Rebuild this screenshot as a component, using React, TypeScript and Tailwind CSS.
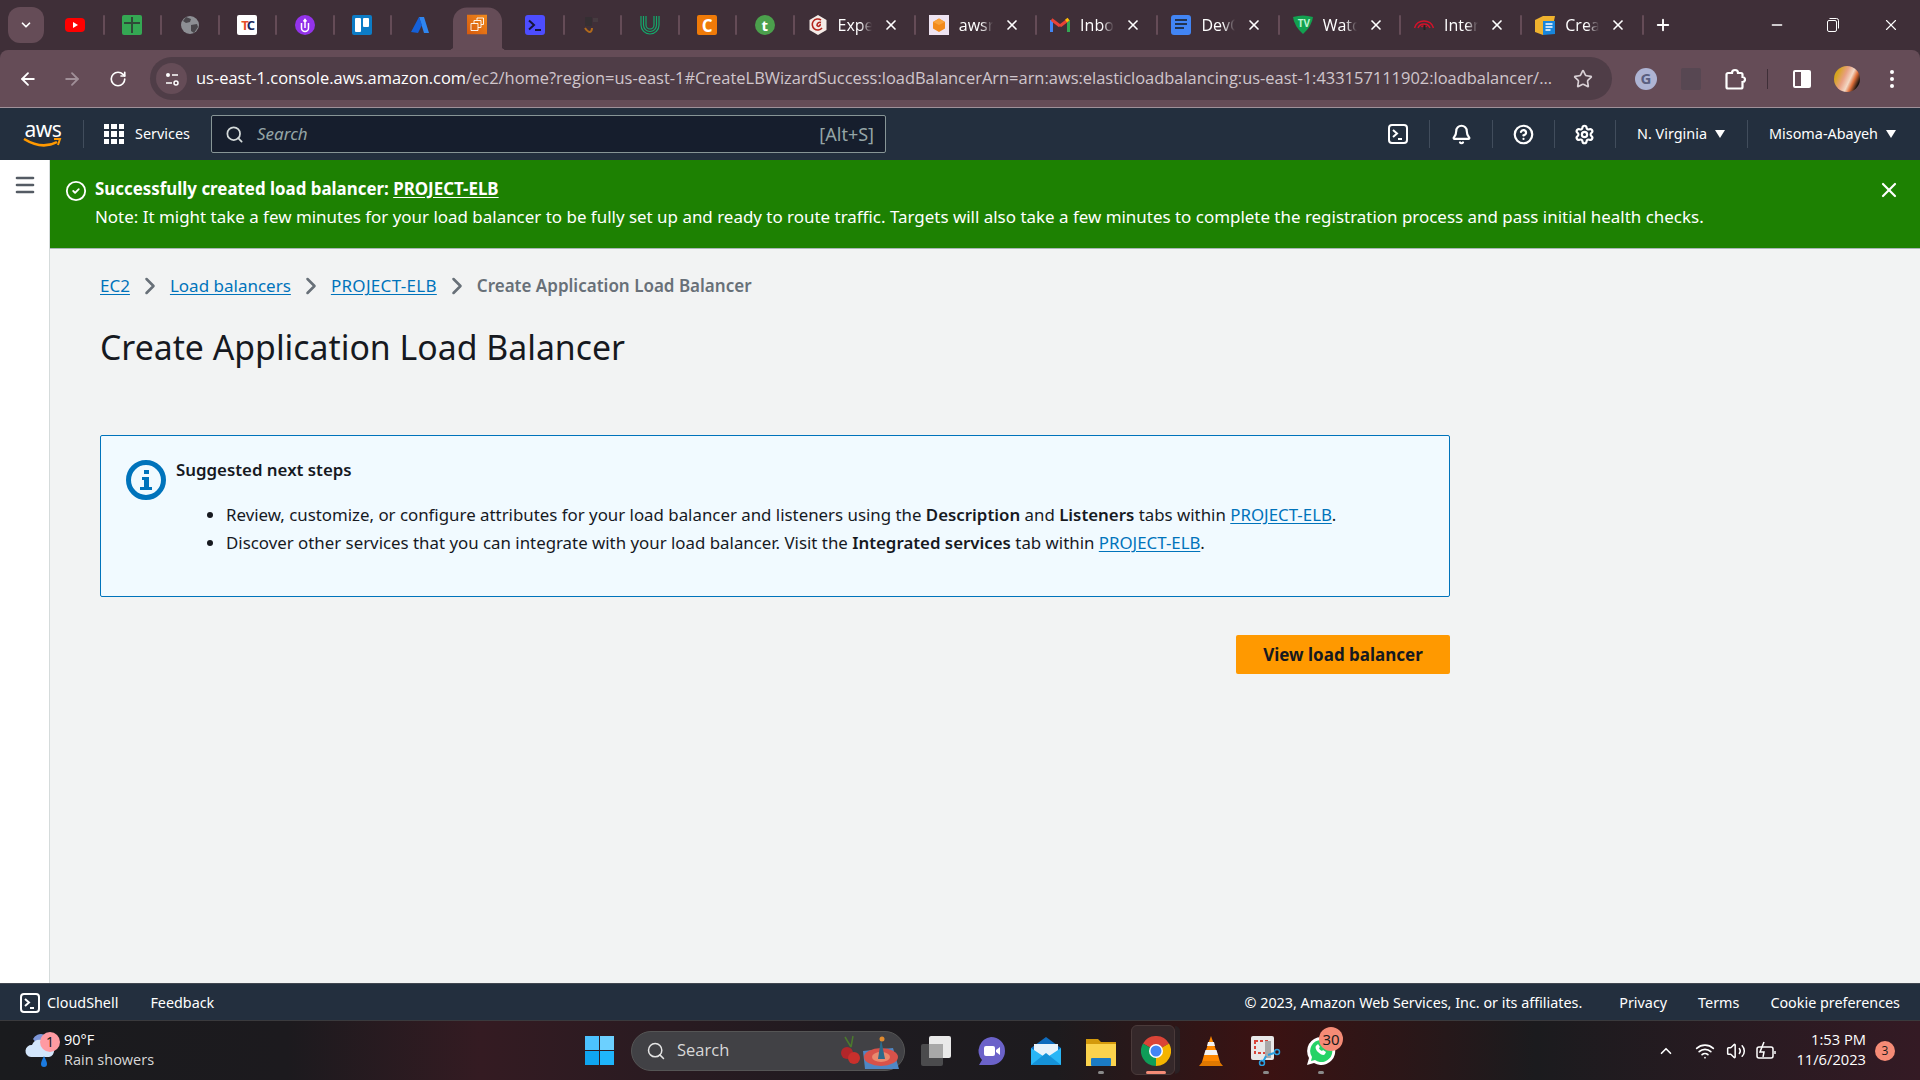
import {
  ArrowLeft,
  ArrowRight,
  Bell,
  ChevronDown,
  ChevronRight,
  ChevronUp,
  CircleCheck,
  CircleHelp,
  Menu,
  Minus,
  Plus,
  RotateCw,
  Search,
  Settings,
  Star,
  Volume2,
  Wifi,
  X,
} from "lucide-react";
import type { ReactNode } from "react";

/* favicons for the tab strip */
const Youtube = () => (
  <svg width="20" height="20" viewBox="0 0 20 20">
    <rect y="3" width="20" height="14" rx="4" fill="#f00" />
    <path d="M8 7l5 3-5 3z" fill="#fff" />
  </svg>
);
const SheetsPlus = () => (
  <svg width="20" height="20" viewBox="0 0 20 20">
    <rect width="20" height="20" rx="2" fill="#34a853" />
    <path d="M2 8h16M10 2v16" stroke="#2f4a38" strokeWidth="2" />
  </svg>
);
const Globe = () => (
  <svg width="20" height="20" viewBox="0 0 20 20">
    <circle cx="10" cy="10" r="9" fill="#8d8f94" />
    <path d="M6 2l5 2-1 3-4 1-3-2zM11 10l6-1 1 3-4 6-3-2z" fill="#49464b" />
  </svg>
);
const TcLogo = () => (
  <div className="flex h-5 w-5 items-center justify-center rounded-[2px] bg-white text-[13px] font-bold leading-none tracking-[-2px]">
    <span className="text-[#e8502a]">T</span>
    <span className="text-[#1b2a5c]">C</span>
  </div>
);
const PurpleU = () => (
  <svg width="20" height="20" viewBox="0 0 20 20">
    <circle cx="10" cy="10" r="10" fill="#9333ea" />
    <path d="M6.500 8v5a3.500 3.500 0 0 0 7 0V8M10 13V6M8.500 6.500L10 4.500l1.500 2" fill="none" stroke="#fff" strokeWidth="1.500" />
  </svg>
);
const Trello = () => (
  <svg width="20" height="20" viewBox="0 0 20 20">
    <rect width="20" height="20" rx="2" fill="#0c7cc6" />
    <rect x="3" y="3" width="6" height="14" rx="1" fill="#fff" />
    <rect x="11" y="3" width="6" height="9" rx="1" fill="#fff" />
  </svg>
);
const Azure = () => (
  <svg width="20" height="20" viewBox="0 0 20 20">
    <path d="M9 2h5l5 16h-5z" fill="#2f86f0" />
    <path d="M9 2L1 17l7 1 4-8z" fill="#1560d8" />
  </svg>
);
const Ec2 = () => (
  <svg width="20" height="20" viewBox="0 0 20 20">
    <defs>
      <linearGradient id="ec2" x1="0" y1="1" x2="1" y2="0">
        <stop offset="0" stopColor="#d4590e" />
        <stop offset="1" stopColor="#f28a1c" />
      </linearGradient>
    </defs>
    <rect width="20" height="20" fill="url(#ec2)" />
    <path d="M4 9h7v7H4zM7 9V6h7v7h-3M10 6V3.500h6.500V10H14" fill="none" stroke="#fff" strokeWidth="1" opacity=".9" />
  </svg>
);
const Terminal = () => (
  <svg width="20" height="20" viewBox="0 0 20 20">
    <rect width="20" height="20" rx="3" fill="#4d4dff" />
    <path d="M4 5.500L9 10l-5 4.500" fill="none" stroke="#16163a" strokeWidth="2" />
    <path d="M10 15h6" stroke="#16163a" strokeWidth="2" />
  </svg>
);
const AmazonDark = () => (
  <svg width="20" height="20" viewBox="0 0 20 20">
    <path d="M3 2h7v9H3z" fill="#352f33" />
    <path d="M11 3h5v4h-5z" fill="#463b40" />
    <path d="M3 13c2 3 4 4 5 4s2-2 2-4" fill="none" stroke="#b26a1b" strokeWidth="2" />
  </svg>
);
const UpworkU = () => (
  <svg width="20" height="20" viewBox="0 0 20 20" fill="none" stroke="#14a86b" strokeWidth="1.200">
    <path d="M1 1v9a9 9 0 0 0 18 0V1" />
    <path d="M3.500 1v9a6.500 6.500 0 0 0 13 0V1" />
    <path d="M6 1v9a4 4 0 0 0 8 0V1" />
  </svg>
);
const OrangeC = () => (
  <div className="flex h-5 w-5 items-center justify-center rounded-[2px] bg-[#ef7a08] text-[17px] font-bold leading-none text-white">C</div>
);
const GreenT = () => (
  <div className="flex h-5 w-5 items-center justify-center rounded-full bg-[#4ba04c] text-[15px] font-bold leading-none text-white">t</div>
);
const Hexagon = () => (
  <svg width="20" height="20" viewBox="0 0 20 20">
    <path d="M10 0l8.500 5v10L10 20l-8.500-5V5z" fill="#f5ece8" />
    <path d="M13 5a5.500 5.500 0 1 0 1 8M13 7.500a3 3 0 0 0-4 3c1 2 4 0 3-1.500" fill="none" stroke="#b3261e" strokeWidth="1.600" />
  </svg>
);
const OrangeCube = () => (
  <svg width="20" height="20" viewBox="0 0 20 20">
    <rect width="20" height="20" fill="#efe4f2" />
    <path d="M10 3.500l6 3.500v6.500L10 17l-6-3.500V7z" fill="#f28a1c" />
    <path d="M10 10l6-3-6-3.500L4 7z" fill="#f9a23c" />
  </svg>
);
const Gmail = () => (
  <svg width="20" height="20" viewBox="0 0 20 20" fill="none">
    <path d="M1.500 17V5" stroke="#4285f4" strokeWidth="3" />
    <path d="M18.500 17V5" stroke="#34a853" strokeWidth="3" />
    <path d="M1.500 4.500L10 11" stroke="#ea4335" strokeWidth="3" />
    <path d="M10 11l8.500-6.500" stroke="#ea4335" strokeWidth="3" />
    <path d="M16 6l2.500-2" stroke="#fbbc04" strokeWidth="3" />
  </svg>
);
const Docs = () => (
  <svg width="20" height="20" viewBox="0 0 20 20">
    <rect width="20" height="20" rx="3" fill="#4285f4" />
    <path d="M4 5h12M4 9h12M4 13h9" stroke="#22344f" strokeWidth="2" />
  </svg>
);
const TvShield = () => (
  <div className="relative h-5 w-5">
    <svg width="20" height="20" viewBox="0 0 20 20">
      <path d="M0 2q10-3 20 0q-1 9-10 17Q1 11 0 2z" fill="#12a150" />
    </svg>
    <span className="absolute left-[5px] top-[2px] text-[10px] font-bold leading-3 text-[#bdf3cf]">TV</span>
  </div>
);
const Gauge = () => (
  <svg width="20" height="20" viewBox="0 0 20 20" fill="none" stroke="#d3122a" strokeWidth="1.500">
    <path d="M0.500 13a10 10 0 0 1 19 0M4 13a6.500 6.500 0 0 1 12 0M7.500 12a3 3 0 0 1 5 0" />
    <path d="M9.500 10h2v5h-2z" fill="#222" stroke="none" />
  </svg>
);
const BoxDoc = () => (
  <svg width="20" height="20" viewBox="0 0 20 20">
    <path d="M0 5l8-4 12 0-1 5-11 14-8-3z" fill="#efb22e" />
    <path d="M8 6h12v13l-12 1z" fill="#1886dc" />
    <path d="M10.500 9h7M10.500 12h7M10.500 15h5" stroke="#fff" strokeWidth="1.500" />
  </svg>
);

/* pinned tab widths come out at 57.5, the others at 121 */
const pinned: ReactNode[] = [
  <Youtube />,
  <SheetsPlus />,
  <Globe />,
  <TcLogo />,
  <PurpleU />,
  <Trello />,
  <Azure />,
  <Ec2 />,
  <Terminal />,
  <AmazonDark />,
  <UpworkU />,
  <OrangeC />,
  <GreenT />,
];

const openTabs: { title: string; icon: ReactNode }[] = [
  { title: "Expe", icon: <Hexagon /> },
  { title: "awsr", icon: <OrangeCube /> },
  { title: "Inbo", icon: <Gmail /> },
  { title: "DevO", icon: <Docs /> },
  { title: "Watc", icon: <TvShield /> },
  { title: "Inter", icon: <Gauge /> },
  { title: "Crea", icon: <BoxDoc /> },
];

const Sep = ({ hidden }: { hidden?: boolean }) => (
  <div className={`h-5 w-[2px] shrink-0 rounded-full ${hidden ? "bg-transparent" : "bg-[#654c57]"}`} />
);

function TabStrip() {
  return (
    <div className="flex h-[50px] shrink-0 items-center bg-[#3f2f38] font-['Open_Sans',sans-serif] text-white">
      <div className="ml-2 mr-[3px] flex h-9 w-9 items-center justify-center rounded-xl bg-[#654c57]">
        <ChevronDown size={14} strokeWidth={3} />
      </div>
      {pinned.map((icon, i) => (
        <div key={i} className="flex items-center">
          {i === 7 ? (
            <div className="relative flex h-[43px] w-[55.5px] translate-y-[3.5px] justify-center">
              <span className="absolute bottom-0 left-[-4px] h-[10px] w-[10px] bg-[radial-gradient(circle_at_0_0,transparent_10px,#654c57_10.5px)]" />
              <div className="flex h-[43px] w-[49px] items-center justify-center rounded-t-[14px] bg-[#654c57] pb-2">{icon}</div>
              <span className="absolute bottom-0 right-[-4px] h-[10px] w-[10px] bg-[radial-gradient(circle_at_100%_0,transparent_10px,#654c57_10.5px)]" />
            </div>
          ) : (
            <div className="flex w-[55.5px] items-center justify-center">{icon}</div>
          )}
          <Sep hidden={i === 6 || i === 7} />
        </div>
      ))}
      {openTabs.map((t) => (
        <div key={t.title} className="flex items-center">
          <div className="flex w-[119.3px] items-center pl-[13px]">
            {t.icon}
            <span className="ml-[10px] w-[34px] overflow-hidden whitespace-nowrap text-[16px] font-medium [mask-image:linear-gradient(90deg,#000_65%,transparent)]">
              {t.title}
            </span>
            <X size={16} strokeWidth={2.5} className="ml-[11px]" />
          </div>
          <Sep />
        </div>
      ))}
      <Plus size={18} strokeWidth={2.5} className="ml-[10px]" />
      <div className="ml-auto flex items-center">
        <Minus size={16} className="mr-[42px]" />
        <svg width="12" height="14" viewBox="0 0 12 14" fill="none" stroke="#fff" strokeWidth="1" className="mr-[43px]">
          <rect x="0.500" y="2.500" width="9" height="11" rx="1.500" />
          <path d="M2.500 0.500h7a2 2 0 0 1 2 2v8" />
        </svg>
        <X size={18} strokeWidth={1.5} className="mr-[20px]" />
      </div>
    </div>
  );
}

function Toolbar() {
  return (
    <div className="flex h-[58px] shrink-0 items-center rounded-t-lg border-b border-[#a0919a] bg-[#654c57] font-['Open_Sans',sans-serif] text-white">
      <ArrowLeft size={20} strokeWidth={2.2} className="ml-[18px]" />
      <ArrowRight size={20} strokeWidth={2.2} className="ml-[24px] text-[#a08f98]" />
      <RotateCw size={18} strokeWidth={2.2} className="ml-[27px]" />
      <div className="ml-[23px] flex h-[43px] w-[1462px] items-center rounded-full bg-[#4f3d47]">
        <div className="ml-[6px] flex h-[31px] w-[31px] items-center justify-center rounded-full bg-[#654c57]">
          <svg width="16" height="16" viewBox="0 0 16 16" fill="none" stroke="#fff" strokeWidth="1.500">
            <circle cx="4" cy="4" r="2" fill="#fff" stroke="none" />
            <path d="M8 4h6M2 12h6" />
            <circle cx="12" cy="12" r="2" />
          </svg>
        </div>
        <div className="ml-[9px] w-[1366px] whitespace-nowrap text-[16.45px] text-[#d0c6cc]">
          <span className="text-white">us-east-1.console.aws.amazon.com</span>
          /ec2/home?region=us-east-1#CreateLBWizardSuccess:loadBalancerArn=arn:aws:elasticloadbalancing:us-east-1:433157111902:loadbalancer/...
        </div>
        <Star size={20} strokeWidth={2} className="ml-[11px] text-[#d9d0d5]" />
      </div>
      <div className="ml-[23px] flex h-[22px] w-[22px] items-center justify-center rounded-full bg-[#aeb4d4] text-[15px] font-bold text-[#5a5f80]">G</div>
      <div className="ml-[24px] h-[22px] w-[20px] rounded-[2px] bg-[#574752]" />
      {/* extensions puzzle piece */}
      <svg width="21" height="24" viewBox="0 0 21 24" fill="none" stroke="#fff" strokeWidth="2.200" className="ml-[24px]">
        <path d="M3 6h4a3 3 0 0 1 6 0h3a1.500 1.500 0 0 1 1.500 1.500V10a2.500 2.500 0 0 1 0 5v5a1.500 1.500 0 0 1-1.500 1.500H3A1.500 1.500 0 0 1 1.500 20V7.500A1.500 1.500 0 0 1 3 6z" />
      </svg>
      <div className="ml-[21px] h-[20px] w-[1px] bg-[#3f2f38]" />
      <div className="ml-[25px] flex h-[18px] w-[18px] justify-end rounded-[2px] border-2 border-white">
        <div className="w-[8px] bg-white" />
      </div>
      <div className="ml-[23px] h-[26px] w-[26px] rounded-full bg-[linear-gradient(115deg,#d6a520_18%,#e9a083_40%,#f3d9c6_58%,#e0703a_70%,#1b1410_85%)]" />
      <div className="ml-[30px] flex flex-col gap-[3px]">
        <span className="h-[4px] w-[4px] rounded-full bg-white" />
        <span className="h-[4px] w-[4px] rounded-full bg-white" />
        <span className="h-[4px] w-[4px] rounded-full bg-white" />
      </div>
    </div>
  );
}

const CloudShellIcon = ({ size }: { size: number }) => (
  <svg width={size} height={size} viewBox="0 0 20 20" fill="none" stroke="#fff">
    <rect x="1" y="1" width="18" height="18" rx="3" strokeWidth="2" />
    <path d="M5 6l4 3.500-4 3.500" strokeWidth="2" />
    <path d="M10 15h4" strokeWidth="2" />
  </svg>
);

const HeaderSep = () => <div className="h-[28px] w-[1px] bg-[#414d5c]" />;

const Caret = () => (
  <svg width="12" height="10" viewBox="0 0 12 10">
    <path d="M1 1h10L6 9z" fill="#fff" />
  </svg>
);

function AwsHeader() {
  return (
    <div className="flex h-[52px] shrink-0 items-center bg-[#232f3e] text-[14.4px] text-white">
      <div className="ml-[23px] flex w-[40px] flex-col items-center">
        <span className="h-[17px] text-[21px] leading-[17px] tracking-[-0.5px]">aws</span>
        <svg width="40" height="10" viewBox="0 0 40 10" fill="none">
          <path d="M1 1q18 11 33 3" stroke="#f90" strokeWidth="2.500" />
          <path d="M31 1l6 0-2 6" stroke="#f90" strokeWidth="2" />
        </svg>
      </div>
      <div className="ml-[20px] h-[28px] w-[1px] bg-[#414d5c]" />
      <div className="ml-[20px] grid h-[20px] w-[20px] grid-cols-3 gap-[2px]">
        {Array.from({ length: 9 }).map((_, i) => (
          <span key={i} className="bg-white" />
        ))}
      </div>
      <span className="ml-[11px] w-[55px]">Services</span>
      <div className="ml-[21px] flex h-[38px] w-[675px] items-center rounded-[2px] border border-[#879596] bg-[#161e2d]">
        <Search size={19} strokeWidth={2.2} className="ml-[13px] text-[#d5dbdb]" />
        <span className="ml-[13px] text-[17px] italic text-[#95a5a6]">Search</span>
        <span className="ml-auto mr-[11px] text-[18px] text-[#95a5a6]">[Alt+S]</span>
      </div>
      <div className="ml-auto flex items-center">
        <CloudShellIcon size={20} />
        <div className="mx-[21px]">
          <HeaderSep />
        </div>
        <Bell size={21} strokeWidth={2.5} />
        <div className="mx-[20px]">
          <HeaderSep />
        </div>
        <CircleHelp size={21} strokeWidth={2.5} />
        <div className="ml-[20px] mr-[19px]">
          <HeaderSep />
        </div>
        <Settings size={21} strokeWidth={2.5} />
        <div className="ml-[20px] mr-[21px]">
          <HeaderSep />
        </div>
        <span>N. Virginia</span>
        <span className="ml-[7px]">
          <Caret />
        </span>
        <div className="ml-[21px] mr-[21px]">
          <HeaderSep />
        </div>
        <span>Misoma-Abayeh</span>
        <span className="ml-[7px] mr-[23px]">
          <Caret />
        </span>
      </div>
    </div>
  );
}

const Crumb = ({ children }: { children: ReactNode }) => (
  <a className="text-[#0073bb] underline underline-offset-2">{children}</a>
);

const CrumbSep = () => <ChevronRight size={28} strokeWidth={2.2} className="mx-[6px] text-[#687078]" />;

function Content() {
  return (
    <div className="flex min-h-0 flex-1">
      <aside className="w-[50px] shrink-0 border-r border-[#d5dbdb] bg-white pl-[13px] pt-[13px]">
        <Menu size={24} strokeWidth={2.6} className="text-[#545b64]" />
      </aside>
      <main className="flex-1 bg-[#f2f3f3]">
        <div className="flex h-[89px] items-start border-b border-[#aab7b8] bg-[#1d8102] pl-[15px] pr-[19px] pt-[15px] text-[16.95px] text-white">
          <CircleCheck size={22} strokeWidth={2} className="mt-[5px]" />
          <div className="ml-[8px] leading-[28px]">
            <div className="text-[16.9px] font-bold">
              Successfully created load balancer: <a className="underline underline-offset-2">PROJECT-ELB</a>
            </div>
            <div>
              Note: It might take a few minutes for your load balancer to be fully set up and ready to route traffic. Targets will also take a few minutes to complete the registration process and pass initial health checks.
            </div>
          </div>
          <X size={24} strokeWidth={2.2} className="ml-auto mt-[3px]" />
        </div>
        <div className="pl-[50px]">
          <div className="mt-[24px] flex h-[26px] items-center text-[17px]">
            <Crumb>EC2</Crumb>
            <CrumbSep />
            <Crumb>Load balancers</Crumb>
            <CrumbSep />
            <span className="tracking-[0.3px]">
              <Crumb>PROJECT-ELB</Crumb>
            </span>
            <CrumbSep />
            <span className="font-semibold text-[#687078]">Create Application Load Balancer</span>
          </div>
          <h1 className="mt-[25px] text-[33.8px] font-normal leading-[46px] text-[#16191f]">Create Application Load Balancer</h1>
          <div className="mt-[65px] h-[162px] w-[1350px] rounded-[2px] border border-[#0073bb] bg-[#f1faff] pl-[25px] pt-[24px] text-[16.85px] leading-[28px] text-[#16191f]">
            <div className="flex">
              <svg width="40" height="40" viewBox="0 0 40 40" className="shrink-0">
                <circle cx="20" cy="20" r="17.500" fill="none" stroke="#0073bb" strokeWidth="5" />
                <rect x="18" y="10" width="5" height="4" fill="#0073bb" />
                <path d="M16 17h7v10h3v3H14v-3h4v-7h-2z" fill="#0073bb" />
              </svg>
              <div className="ml-[10px] -mt-[4px]">
                <div className="font-semibold">Suggested next steps</div>
                <ul className="ml-[50px] mt-[17px] list-disc">
                  <li>
                    Review, customize, or configure attributes for your load balancer and listeners using the <span className="font-semibold">Description</span> and <span className="font-semibold">Listeners</span> tabs within <Crumb>PROJECT-ELB</Crumb>.
                  </li>
                  <li>
                    Discover other services that you can integrate with your load balancer. Visit the <span className="font-semibold">Integrated services</span> tab within <Crumb>PROJECT-ELB</Crumb>.
                  </li>
                </ul>
              </div>
            </div>
          </div>
          <div className="flex w-[1350px] justify-end pt-[38px]">
            <button className="h-[39px] w-[214px] rounded-[2px] bg-[#ff9900] text-[17px] font-bold text-[#16191f]">View load balancer</button>
          </div>
        </div>
      </main>
    </div>
  );
}

function ConsoleFooter() {
  return (
    <div className="flex h-[37px] shrink-0 items-center border-t border-[#414750] bg-[#232f3e] pt-[2px] text-[14.35px] text-white">
      <div className="ml-[20px]">
        <CloudShellIcon size={20} />
      </div>
      <span className="ml-[7px]">CloudShell</span>
      <span className="ml-[32px]">Feedback</span>
      <span className="ml-auto">© 2023, Amazon Web Services, Inc. or its affiliates.</span>
      <span className="ml-[37px]">Privacy</span>
      <span className="ml-[31px]">Terms</span>
      <span className="ml-[31px] mr-[20px]">Cookie preferences</span>
    </div>
  );
}

const Dot = ({ wide }: { wide?: boolean }) => (
  <div className={`relative mx-auto mt-[4px] h-[3px] rounded-full ${wide ? "w-[20px] bg-[#f58b76]" : "w-[6px] bg-[#8a8a8a]"}`} />
);

const Badge = ({ children, className }: { children: ReactNode; className: string }) => (
  <span className={`absolute flex items-center justify-center rounded-full text-[#1b1b1b] ${className}`}>{children}</span>
);

function TaskIcon({ children, dot, wide, className = "" }: { children: ReactNode; dot?: boolean; wide?: boolean; className?: string }) {
  return (
    <div className={`relative flex w-[55px] flex-col items-center pt-[14px] ${className}`}>
      <div className="flex h-[32px] items-center">{children}</div>
      {dot && <Dot wide={wide} />}
    </div>
  );
}

function Taskbar() {
  return (
    <div className="flex h-[60px] shrink-0 items-center border-t border-[#3a3a3d] bg-[linear-gradient(90deg,#1a1b1e_0%,#1c1a1e_15%,#341b22_25%,#1e1b20_45%,#1d1b1e_55%,#3b1212_66%,#1b1b1e_80%,#341a24_100%)] text-white">
      {/* weather */}
      <div className="relative ml-[25px] w-[30px]">
        <svg width="30" height="36" viewBox="0 0 30 36">
          <path d="M8 6a9 9 0 0 1 17 5l-8 6z" fill="#7d96d8" />
          <path d="M6 24a6 6 0 0 1 1-12 8 8 0 0 1 15 0 6 6 0 0 1 2 12z" fill="#d3e6fb" />
          <path d="M19 23c2 4 3 6 3 8a3 3 0 0 1-6 0c0-2 1-4 3-8z" fill="#1b7be0" />
        </svg>
        <Badge className="-right-[5px] -top-[1px] h-[20px] w-[20px] bg-[#ff9aa2] text-[14px]">1</Badge>
      </div>
      <div className="ml-[9px] -mt-[2px] w-[120px] font-['Open_Sans',sans-serif] text-[14.5px] leading-[20px]">
        <div>90°F</div>
        <div className="whitespace-nowrap text-[#d8d8d8]">Rain showers</div>
      </div>
      {/* start + search */}
      <div className="ml-[401px] grid h-[29px] w-[29px] grid-cols-2 gap-[1px]">
        <span className="bg-[#4cc2ff]" />
        <span className="bg-[#6cd0ff]" />
        <span className="bg-[#0fa5f0]" />
        <span className="bg-[#1fb5fb]" />
      </div>
      <div className="ml-[17px] flex h-[40px] w-[274px] items-center rounded-full border border-[#555] bg-[#414145]">
        <Search size={20} strokeWidth={1.8} className="ml-[14px] text-[#e5e5e5]" />
        <span className="ml-[11px] font-['Open_Sans',sans-serif] text-[16.5px] text-[#d8d8d8]">Search</span>
        <svg width="60" height="36" viewBox="0 0 60 36" className="ml-auto mr-[3px]">
          <path d="M4 4l6 10M12 3l-2 11" stroke="#4b7a2c" strokeWidth="1.500" fill="none" />
          <circle cx="6" cy="20" r="6" fill="#b3262a" />
          <circle cx="13" cy="25" r="6" fill="#c9302c" />
          <path d="M24 36l-2-18 30-3 6 21z" fill="#4f87c5" />
          <ellipse cx="40" cy="24" rx="17" ry="9" fill="#d8524a" />
          <ellipse cx="40" cy="24" rx="9" ry="5" fill="#e98a6e" />
          <path d="M40 6l4 20h-7z" fill="#2c6a8a" />
          <circle cx="41" cy="6" r="2.500" fill="#e08a2e" />
        </svg>
      </div>
      {/* pinned apps */}
      <div className="ml-[3px] flex items-start self-stretch">
        <TaskIcon>
          <svg width="30" height="30" viewBox="0 0 30 30">
            <rect y="8" width="22" height="22" rx="2" fill="#4b4b4d" />
            <rect x="8" y="0" width="22" height="22" rx="2" fill="#e9e9e9" />
            <rect x="8" y="8" width="14" height="14" fill="#a8a8a8" />
          </svg>
        </TaskIcon>
        <TaskIcon>
          <svg width="30" height="30" viewBox="0 0 30 30">
            <path d="M15 1a14 14 0 0 1 0 28H3l3-5A14 14 0 0 1 15 1z" fill="#6b62c9" />
            <rect x="8" y="10" width="11" height="10" rx="2" fill="#fff" />
            <path d="M20 14l4-3v8l-4-3z" fill="#fff" />
          </svg>
        </TaskIcon>
        <TaskIcon>
          <svg width="30" height="30" viewBox="0 0 30 30">
            <path d="M15 1l15 11v17H0V12z" fill="#0f6cbd" />
            <path d="M3 8h24v8l-12 6-12-6z" fill="#e8f3fb" />
            <path d="M0 12l15 10L30 12v17H0z" fill="#29b6f6" />
            <path d="M0 29l15-12 15 12z" fill="#1592d8" />
          </svg>
        </TaskIcon>
        <TaskIcon dot>
          <svg width="30" height="30" viewBox="0 0 30 30">
            <path d="M0 3h12l3 3h15v24H0z" fill="#d49a0c" />
            <path d="M0 8h30v22H0z" fill="#fbd34d" />
            <rect x="5" y="22" width="20" height="8" rx="1" fill="#1b7bc4" />
          </svg>
        </TaskIcon>
        <TaskIcon
          dot
          wide
          className="before:absolute before:left-[3px] before:top-[4px] before:h-[50px] before:w-[44px] before:rounded-md before:border before:border-[#4a3a3a] before:bg-[#35282a] before:content-[''] after:absolute after:left-[47px] after:top-[5px] after:h-[48px] after:w-[5px] after:rounded-r-md after:bg-[#2a2023] after:content-['']"
        >
          <svg width="30" height="30" viewBox="0 0 30 30" className="relative">
            <path d="M15 15L2 7.500A15 15 0 0 1 28 7.500Z" fill="#db4437" />
            <path d="M15 15L28 7.500A15 15 0 0 1 15 30Z" fill="#f4b400" />
            <path d="M15 15L15 30A15 15 0 0 1 2 7.500Z" fill="#0f9d58" />
            <circle cx="15" cy="15" r="7" fill="#fff" />
            <circle cx="15" cy="15" r="5.500" fill="#4285f4" />
          </svg>
        </TaskIcon>
        <TaskIcon>
          <svg width="26" height="30" viewBox="0 0 26 30">
            <path d="M13 0l5 14h-10z" fill="#ff8800" />
            <path d="M10 6h6l1 4H9zM7.500 14h11l1.500 5H6z" fill="#f3f3f3" />
            <path d="M6 19h14l2 7H4z" fill="#ff8800" />
            <path d="M1 30l4-5h16l4 5z" fill="#e07800" />
          </svg>
        </TaskIcon>
        <TaskIcon dot>
          <svg width="30" height="30" viewBox="0 0 30 30">
            <rect width="23" height="24" rx="2" fill="#e8e8e8" />
            <rect x="4" y="5" width="12" height="12" fill="none" stroke="#d9453a" strokeWidth="2" strokeDasharray="3 2" />
            <rect x="14" y="5" width="6" height="17" fill="#a9a9a9" />
            <path d="M15 20l-3 6M17 19l6-2" stroke="#2a9fe0" strokeWidth="2" />
            <circle cx="11" cy="27" r="2.500" fill="none" stroke="#2a9fe0" strokeWidth="1.500" />
            <circle cx="26" cy="16" r="2.500" fill="none" stroke="#2a9fe0" strokeWidth="1.500" />
          </svg>
        </TaskIcon>
        <TaskIcon dot>
          <svg width="30" height="30" viewBox="0 0 30 30">
            <path d="M15 1a14 14 0 1 1-7 26L1 29l2-7A14 14 0 0 1 15 1z" fill="#fff" />
            <path d="M15 4a11 11 0 1 1-6 20l-4 1 1-4A11 11 0 0 1 15 4z" fill="#25d366" />
            <path d="M11 9c-2 1-2 4 1 7s6 4 7 2l1-2-3-2-1 1c-2-1-3-2-3-3l1-1-2-3z" fill="#fff" />
          </svg>
          <Badge className="left-[26px] top-[6px] h-[24px] w-[24px] bg-[#f58b76] text-[15px]">30</Badge>
        </TaskIcon>
      </div>
      {/* tray */}
      <div className="ml-auto flex items-center font-['Open_Sans',sans-serif]">
        <ChevronUp size={18} strokeWidth={2.2} />
        <Wifi size={20} strokeWidth={2} className="ml-[20px]" />
        <Volume2 size={20} strokeWidth={1.8} className="ml-[11px]" />
        <svg width="20" height="20" viewBox="0 0 20 20" fill="none" stroke="#fff" strokeWidth="1.500" className="ml-[10px]">
          <rect x="1" y="6" width="16" height="11" rx="2" />
          <path d="M19 10v3" />
          <path d="M8 1L4 11h4l-1 5" />
        </svg>
        <div className="ml-[10px] -mt-[4px] w-[80px] text-right text-[14.7px] leading-[20px]">
          <div>1:53 PM</div>
          <div>11/6/2023</div>
        </div>
        <span className="ml-[9px] mr-[25px] flex h-[20px] w-[20px] items-center justify-center rounded-full bg-[#f58b76] text-[12px] text-[#1b1b1b]">3</span>
      </div>
    </div>
  );
}

export default function App() {
  return (
    <div className="flex h-[1080px] w-[1920px] flex-col overflow-hidden bg-[#3f2f38] font-['Noto_Sans',sans-serif]">
      <TabStrip />
      <Toolbar />
      <AwsHeader />
      <Content />
      <ConsoleFooter />
      <Taskbar />
    </div>
  );
}
